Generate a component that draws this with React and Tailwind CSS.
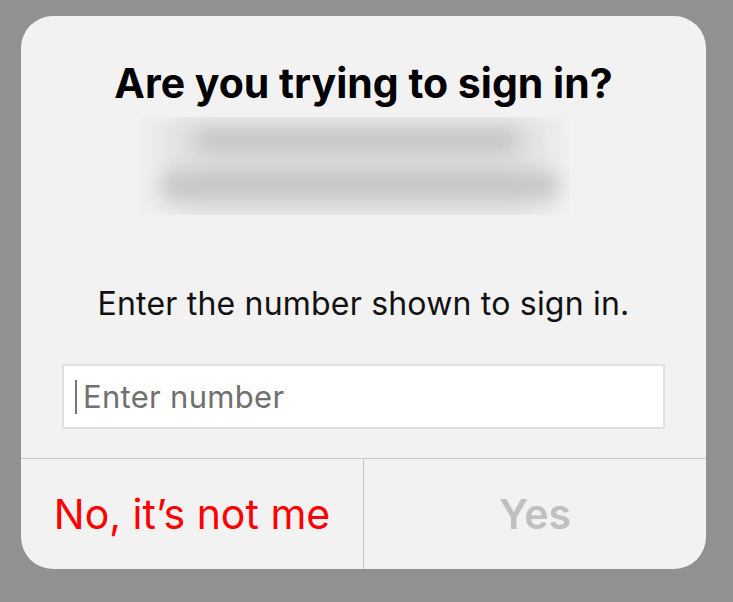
export default function App() {
  return (
    <div className="flex h-[602px] w-full items-start bg-[#919191] pl-[21px] pt-4" style={{ fontFamily: 'Inter, "Liberation Sans", Arial, sans-serif' }}>
      <div className="flex h-[553px] w-[685px] flex-col overflow-hidden rounded-[32px] bg-[#f2f2f2]">
        <div className="flex flex-1 flex-col items-center px-[41px] pt-[43px]">
          <h1 className="text-[41px] font-bold leading-[48px] text-black">Are you trying to sign in?</h1>

          {/* account name + email, blurred out */}
          <div className="mr-[17px] mt-[10px] h-[98px] w-[430px] overflow-hidden">
            <div className="flex h-full flex-col items-center bg-[linear-gradient(to_right,rgba(220,220,220,0),#dcdcdc_12%,#dcdcdc_88%,rgba(220,220,220,0))] pt-[13px] blur-[9px]">
              <div className="ml-[4px] h-[20px] w-[320px] rounded-full bg-[#c4c4c4]" />
              <div className="ml-[10px] mt-[22px] h-[26px] w-[400px] rounded-full bg-[#c6c6c6]" />
            </div>
          </div>

          <p className="mt-[69px] text-[32px] leading-[40px] tracking-[0.2px] text-[#111]">Enter the number shown to sign in.</p>

          <div className="mt-[40px] flex h-[65px] w-full items-center border-2 border-[#e0e0e0] bg-white pl-[11px]">
            <span className="h-[34px] w-[2px] bg-[#777]" />
            <span className="ml-[6px] text-[31px] leading-none tracking-[0.3px] text-[#707070]">Enter number</span>
          </div>
        </div>

        <div className="flex h-[111px] border-t border-[#c8c8c8]">
          <button type="button" className="flex flex-1 items-center justify-center border-r border-[#c8c8c8] text-[41px] leading-none text-[#ff0000]">
            No, it’s not me
          </button>
          <button type="button" className="flex flex-1 items-center justify-center text-[41px] font-semibold leading-none text-[#c0c0c0]">
            Yes
          </button>
        </div>
      </div>
    </div>
  );
}
